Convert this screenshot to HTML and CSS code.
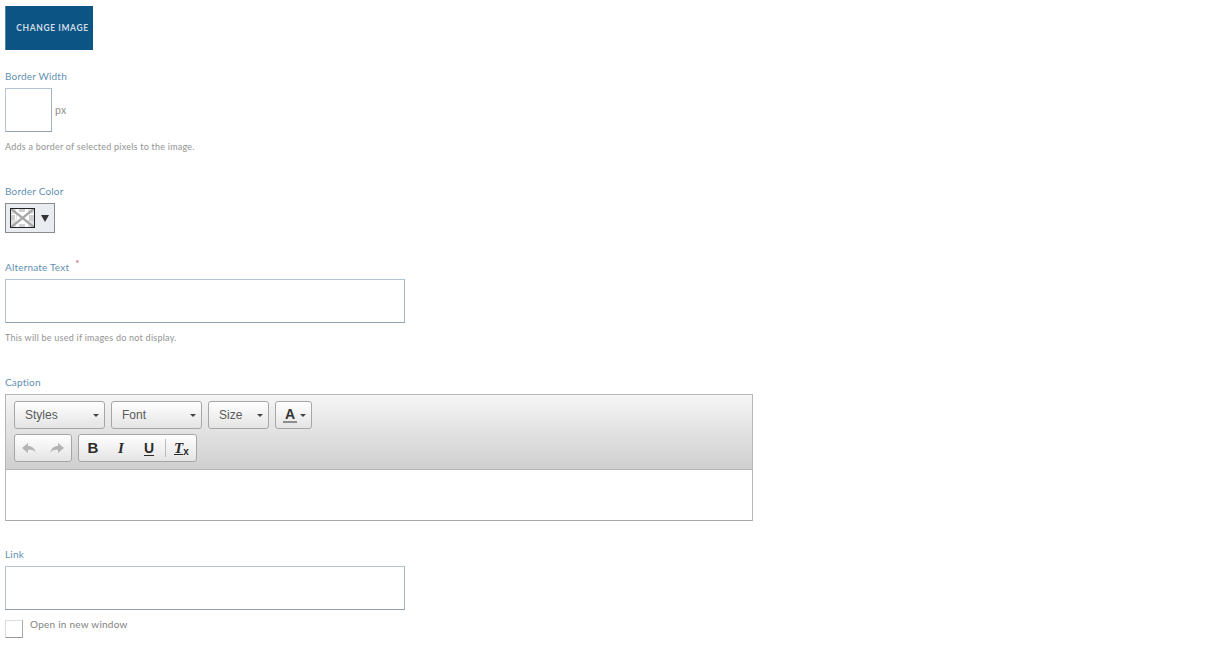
FILE: index.html
```html
<!DOCTYPE html>
<html lang="en">
<head>
<meta charset="utf-8">
<title>Image settings</title>
<link rel="stylesheet" href="styles.css">
</head>
<body>
<form class="form">
  <button type="button" class="primary">CHANGE IMAGE</button>

  <div class="field f-width">
    <label class="label">Border Width</label>
    <div class="inline">
      <input class="input small" type="text">
      <span class="unit">px</span>
    </div>
    <p class="help">Adds a border of selected pixels to the image.</p>
  </div>

  <div class="field f-color">
    <label class="label">Border Color</label>
    <button type="button" class="picker">
      <span class="swatch">
        <svg width="25" height="20" viewBox="0 0 25 20">
          <rect width="25" height="20" fill="#fff"/>
          <path d="M0 0h6v6H0zM18 0h7v6h-7zM0 12h6v8H0zM18 12h7v8h-7zM6 6h1v6H6z" fill="#e2e2e2"/>
          <path d="M9 0h6v4H9zM19 7h6v6h-6zM0 7h5v5H0zM9 16h6v4H9z" fill="#cfcfcf"/>
          <path d="M0 0L25 20M25 0L0 20" stroke="#a8a8a8" stroke-width="2.4"/>
        </svg>
      </span>
      <span class="picker-arrow"></span>
    </button>
  </div>

  <div class="field f-alt">
    <label class="label">Alternate Text <sup class="req">*</sup></label>
    <input class="input wide" type="text">
    <p class="help">This will be used if images do not display.</p>
  </div>

  <div class="field f-caption">
    <label class="label">Caption</label>
    <div class="editor">
      <div class="toolbar">
        <div class="tool-row">
          <span class="combo c-wide"><span>Styles</span><i class="caret"></i></span>
          <span class="combo c-wide"><span>Font</span><i class="caret"></i></span>
          <span class="combo c-size"><span>Size</span><i class="caret"></i></span>
          <span class="colorbtn"><b class="color-a">A</b><i class="caret"></i></span>
        </div>
        <div class="tool-row">
          <span class="group g-history">
            <svg class="hist" width="16" height="12" viewBox="0 0 16 12"><path d="M7 1L1 6l6 5V8c3-.5 5.500 0 7.500 2.500C14 6.500 11 4 7 4z" fill="#b4b4b4"/></svg>
            <svg class="hist" width="16" height="12" viewBox="0 0 16 12"><path d="M9 1l6 5-6 5V8c-3-.5-5.500 0-7.500 2.500C2 6.500 5 4 9 4z" fill="#b4b4b4"/></svg>
          </span>
          <span class="group g-format">
            <span class="fmt bold">B</span>
            <span class="fmt ital">I</span>
            <span class="fmt under">U</span>
            <span class="sep"></span>
            <span class="fmt clear"><span class="clear-t">T</span><span class="clear-x">x</span></span>
          </span>
        </div>
      </div>
      <div class="content"></div>
    </div>
  </div>

  <div class="field f-link">
    <label class="label">Link</label>
    <input class="input wide" type="text">
    <div class="check-row">
      <span class="check"></span>
      <span class="check-label">Open in new window</span>
    </div>
  </div>
</form>
</body>
</html>
```
FILE: styles.css
```css
* { box-sizing: border-box; }
html, body { margin: 0; padding: 0; background: #fff; }
body { font-family: "Lato", "Open Sans", sans-serif; height: 662px; overflow: hidden; }
.form { padding: 6px 5px 0; }
.primary {
  display: block; width: 88px; height: 44px; padding: 0 0 0 6px; border: 0; border-left: 1px solid #5c7f9b;
  background: #0b5484; color: #cfdbe5; font: 700 8.5px/44px "Lato", sans-serif; letter-spacing: .6px; text-align: center;
}
.field { display: block; }
.f-width { margin-top: 19px; }
.f-color { margin-top: 31px; }
.f-alt { margin-top: 27px; }
.f-caption { margin-top: 31px; }
.f-link { margin-top: 26px; }
.label {
  display: block; height: 14px; margin-bottom: 5px;
  font-size: 10px; line-height: 14px; letter-spacing: .18px; color: #6290b1; position: relative;
}
.req { position: absolute; margin-left: 6px; top: -3px; color: #c9565f; font-size: 10px; line-height: 12px; vertical-align: baseline; }
.input { display: block; height: 44px; background: #fff; border: 1px solid #b4c4d2; border-bottom-color: #8fa1b1; border-right-color: #a3b2c0; border-radius: 0; padding: 0; margin: 0; }
.small { width: 47px; }
.wide { width: 400px; }
.inline { display: flex; align-items: center; gap: 3px; }
.unit { font-size: 10.500px; line-height: 14px; color: #8f8f8f; letter-spacing: .2px; }
.help { margin: 7px 0 0; padding-top: 1px; height: 14px; font-size: 9px; line-height: 14px; color: #939393; letter-spacing: .235px; }
.picker {
  display: flex; align-items: center; width: 50px; height: 30px; padding: 0 0 0 4px; margin: 0;
  background: #e9edf1; border: 1px solid #8b8b8b; border-radius: 0;
}
.swatch { display: block; width: 25px; height: 20px; position: relative; overflow: hidden; }
.swatch svg { display: block; }
.swatch::after { content: ""; position: absolute; inset: 0; border: 1px solid #222; }
.picker-arrow { width: 0; height: 0; margin-left: 6px; border: 4px solid transparent; border-top: 7px solid #333; border-bottom: 0; }
.editor { width: 748px; height: 127px; border: 1px solid #b6b6b6; border-bottom-color: #a8a8a8; }
.toolbar {
  height: 75px; padding: 6px 8px 0; border-bottom: 1px solid #b6b6b6;
  background: linear-gradient(#f5f5f5, #cfcfcf);
  display: flex; flex-direction: column; gap: 5px;
}
.tool-row { display: flex; gap: 6px; height: 28px; }
.combo, .colorbtn, .group {
  display: flex; align-items: center; height: 28px; border: 1px solid #a6a6a6; border-radius: 3px;
  background: linear-gradient(#fff, #e4e4e4);
  font: 12px/14px "Liberation Sans", Arial, sans-serif; color: #5a5a5a;
}
.combo { justify-content: space-between; padding: 0 5px 0 10px; }
.c-wide { width: 91px; }
.c-size { width: 61px; }
.colorbtn { width: 37px; padding-left: 7px; gap: 3px; }
.caret { display: block; width: 0; height: 0; border: 3px solid transparent; border-top-color: #444; border-bottom: 0; }
.color-a {
  display: block; width: 14px; text-align: center; font: 700 14px/13px "Liberation Sans", Arial, sans-serif; color: #333;
  border-bottom: 2px solid #8d8d8d; height: 15px;
}
.g-history { width: 58px; padding-left: 6px; gap: 12px; }
.hist { display: block; }
.g-format { width: 119px; padding-left: 7px; position: relative; }
.fmt { display: block; width: 14px; text-align: center; font: 700 15px/18px "Liberation Sans", Arial, sans-serif; color: #2c2c2c; }
.bold { margin-right: 14px; }
.ital { font-family: "Liberation Serif", serif; font-style: italic; margin-right: 14px; }
.under { text-decoration: underline; text-underline-offset: 2px; font-size: 14px; }
.sep { display: block; width: 1px; height: 18px; margin: 0 8px 0 9px; background: #bcbcbc; }
.clear { display: flex; align-items: flex-end; width: 18px; }
.clear-t { font: italic 700 15px/16px "Liberation Serif", serif; text-decoration: underline; }
.clear-x { font: 700 10px/9px "Liberation Sans", Arial, sans-serif; margin-left: 0; }
.content { height: 50px; background: #fff; }
.check-row { display: flex; margin-top: 10px; gap: 7px; }
.check { display: block; width: 18px; height: 18px; background: #fff; border: 1px solid #dcdcdc; border-right-color: #a8a8a8; border-bottom-color: #9a9a9a; }
.check-label { font-size: 10px; line-height: 9px; color: #828282; letter-spacing: .25px; }
```
